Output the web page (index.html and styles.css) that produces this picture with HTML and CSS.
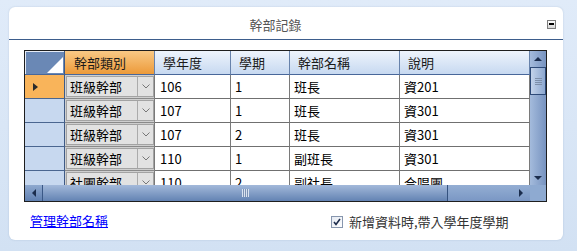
FILE: index.html
```html
<!DOCTYPE html>
<html lang="zh-Hant">
<head>
  <meta charset="UTF-8" />
  <title>幹部記錄</title>
  <link rel="stylesheet" href="styles.css">
</head>
<body>

  <div class="panel">
    <div class="panel-head">
      <span class="panel-title">幹部記錄</span>
      <span class="collapse-btn"></span>
    </div>

    <div class="panel-body">
      <div class="grid">
        <div class="grid-top">
          <div class="grid-view">
            <div class="row head-row">
              <div class="cell corner-head">
                <svg width="40" height="24" viewBox="0 0 40 24"><polygon points="22,22 38,6 38,22" fill="#fff"/></svg>
              </div>
              <div class="cell active">幹部類別</div>
              <div class="cell">學年度</div>
              <div class="cell">學期</div>
              <div class="cell">幹部名稱</div>
              <div class="cell">說明</div>
            </div>

            <div class="row">
              <div class="cell row-head current"></div>
              <div class="cell combo"><div class="combo-box"><span class="combo-text">班級幹部</span><span class="combo-btn"><svg width="8" height="5" viewBox="0 0 8 5"><polyline points="0.5,0.5 4,4 7.5,0.5" fill="none" stroke="#777"/></svg></span></div></div>
              <div class="cell num">106</div>
              <div class="cell">1</div>
              <div class="cell">班長</div>
              <div class="cell">資201</div>
            </div>

            <div class="row">
              <div class="cell row-head"></div>
              <div class="cell combo"><div class="combo-box"><span class="combo-text">班級幹部</span><span class="combo-btn"><svg width="8" height="5" viewBox="0 0 8 5"><polyline points="0.5,0.5 4,4 7.5,0.5" fill="none" stroke="#777"/></svg></span></div></div>
              <div class="cell num">107</div>
              <div class="cell">1</div>
              <div class="cell">班長</div>
              <div class="cell">資301</div>
            </div>

            <div class="row">
              <div class="cell row-head"></div>
              <div class="cell combo"><div class="combo-box"><span class="combo-text">班級幹部</span><span class="combo-btn"><svg width="8" height="5" viewBox="0 0 8 5"><polyline points="0.5,0.5 4,4 7.5,0.5" fill="none" stroke="#777"/></svg></span></div></div>
              <div class="cell num">107</div>
              <div class="cell">2</div>
              <div class="cell">班長</div>
              <div class="cell">資301</div>
            </div>

            <div class="row">
              <div class="cell row-head"></div>
              <div class="cell combo"><div class="combo-box"><span class="combo-text">班級幹部</span><span class="combo-btn"><svg width="8" height="5" viewBox="0 0 8 5"><polyline points="0.5,0.5 4,4 7.5,0.5" fill="none" stroke="#777"/></svg></span></div></div>
              <div class="cell num">110</div>
              <div class="cell">1</div>
              <div class="cell">副班長</div>
              <div class="cell">資301</div>
            </div>

            <div class="row">
              <div class="cell row-head"></div>
              <div class="cell combo"><div class="combo-box"><span class="combo-text">社團幹部</span><span class="combo-btn"><svg width="8" height="5" viewBox="0 0 8 5"><polyline points="0.5,0.5 4,4 7.5,0.5" fill="none" stroke="#777"/></svg></span></div></div>
              <div class="cell num">110</div>
              <div class="cell">2</div>
              <div class="cell">副社長</div>
              <div class="cell">合唱團</div>
            </div>
          </div>

          <div class="vscroll">
            <div class="vs-btn"><span class="arrow-up"></span></div>
            <div class="vs-thumb"><i></i><i></i><i></i><i></i></div>
            <div class="vs-track"></div>
            <div class="vs-btn down"><span class="arrow-down"></span></div>
          </div>
        </div>

        <div class="grid-bottom">
          <div class="hscroll">
            <div class="hs-btn"><span class="arrow-left"></span></div>
            <div class="hs-thumb"><span class="grip"></span></div>
            <div class="hs-track"><span class="arrow-right"></span></div>
          </div>
          <div class="corner"></div>
        </div>
      </div>

      <div class="panel-foot">
        <a href="#" class="manage-link">管理幹部名稱</a>
        <label class="check">
          <svg width="12" height="12" viewBox="0 0 12 12">
            <defs>
              <linearGradient id="cbFill" x1="0" y1="0" x2="1" y2="1">
                <stop offset="0" stop-color="#e4e9f2"/>
                <stop offset="1" stop-color="#ffffff"/>
              </linearGradient>
            </defs>
            <rect x="0.5" y="0.5" width="11" height="11" fill="url(#cbFill)" stroke="#8796ae"/>
            <polyline points="3,6 5,8.5 9,3" fill="none" stroke="#1d2c4c" stroke-width="1.6"/>
          </svg>
          <span>新增資料時,帶入學年度學期</span>
        </label>
      </div>
    </div>
  </div>

</body>
</html>
```

FILE: styles.css
```css
* { box-sizing: border-box; margin: 0; padding: 0; }
body {
  font-family: "Noto Sans CJK TC", "Microsoft JhengHei", sans-serif;
  font-size: 13px;
  color: #000;
  background: linear-gradient(#e0ebf9, #d2e1f3);
  width: 577px;
  height: 251px;
  padding: 7px 0 0 9px;
}

.panel {
  width: 554px;
  height: 233px;
  background: #fff;
  border-radius: 6px;
  box-shadow: 0 0 2px rgba(80, 110, 150, 0.25);
}

.panel-head {
  height: 33px;
  display: flex;
  align-items: center;
  padding: 2px 7px 0 0;
  border-bottom: 1px solid #3d5d8c;
}

.panel-title {
  flex: 1;
  text-align: center;
  color: #555;
}

.collapse-btn {
  width: 9px;
  height: 9px;
  margin-left: 5px;
  border: 1px solid #7c7c7c;
  background: linear-gradient(#fff, #d6d6d6);
  display: flex;
  align-items: center;
  justify-content: center;
}

.collapse-btn::before {
  content: "";
  width: 5px;
  height: 2px;
  background: #000;
}

.panel-body {
  padding: 10px 0 0 15px;
}

/* grid */
.grid {
  width: 523px;
  border: 1px solid #1e1e1e;
}

.grid-top {
  display: flex;
  height: 134px;
}

.grid-view {
  width: 505px;
  height: 134px;
  overflow: hidden;
}

.row {
  display: grid;
  grid-template-columns: 40px 90px 76px 59px 110px 130px;
  height: 24px;
}

.cell {
  border-right: 1px solid #7a7a7a;
  border-bottom: 1px solid #707070;
  padding-left: 4px;
  line-height: 23px;
  white-space: nowrap;
  overflow: hidden;
}

.cell.num {
  padding-left: 5px;
}

.head-row .cell {
  background: linear-gradient(#eef4fc, #c7d9f1);
  border-right-color: #6782ab;
  border-bottom-color: #48679a;
  padding-left: 8px;
  color: #1a1a1a;
}

.head-row .cell.active {
  background: linear-gradient(#f9c985, #ec9a3a);
  padding-left: 9px;
}

.head-row .corner-head {
  background: #6a88b5;
  box-shadow: inset 1px 1px 0 #e6ecf6;
  border-right-color: #3e5a86;
  padding: 0;
}

.corner-head svg {
  display: block;
}

.row-head {
  background: #c7d8ef;
  border-right-color: #3e5a86;
  border-bottom-color: #4a6690;
  padding: 0;
}

.row-head.current {
  background: #f9b45a;
  display: flex;
  align-items: center;
  padding-left: 8px;
}

.row-head.current::before {
  content: "";
  border-left: 5px solid #2b2b2b;
  border-top: 4px solid transparent;
  border-bottom: 4px solid transparent;
}

.cell.combo {
  padding: 1px 0 1px 1px;
  background: #cfcfcf;
  border-bottom-color: #8a8a8a;
}

.combo-box {
  display: flex;
  height: 100%;
  border: 1px solid #a3a3a3;
  background: #e2e2e2;
}

.combo-text {
  flex: 1;
  padding-left: 3px;
  line-height: 19px;
}

.combo-btn {
  width: 16px;
  border-left: 1px solid #ababab;
  display: flex;
  align-items: center;
  justify-content: center;
}

/* scrollbars */
.vscroll {
  width: 16px;
  display: flex;
  flex-direction: column;
  background: linear-gradient(to right, #a4bbdc, #7793c0);
}

.vs-btn {
  height: 16px;
  display: flex;
  align-items: center;
  justify-content: center;
}

.vs-btn.down {
  height: 15px;
}

.vs-thumb {
  height: 28px;
  border: 1px solid #2d4a78;
  background: linear-gradient(to right, #c3d3ea, #8ca7cf);
  display: flex;
  flex-direction: column;
  align-items: center;
  justify-content: center;
  gap: 1px;
}

.vs-thumb i {
  width: 7px;
  height: 1px;
  background: #7d8fa9;
}

.vs-track {
  flex: 1;
}

.arrow-up {
  border-bottom: 4px solid #1b2d4d;
  border-left: 4px solid transparent;
  border-right: 4px solid transparent;
}

.arrow-down {
  border-top: 4px solid #1b2d4d;
  border-left: 4px solid transparent;
  border-right: 4px solid transparent;
}

.arrow-left {
  border-right: 4px solid #1b2d4d;
  border-top: 4px solid transparent;
  border-bottom: 4px solid transparent;
}

.arrow-right {
  border-left: 4px solid #1b2d4d;
  border-top: 4px solid transparent;
  border-bottom: 4px solid transparent;
}

.grid-bottom {
  display: flex;
  height: 16px;
}

.hscroll {
  width: 505px;
  display: flex;
}

.hs-btn {
  width: 18px;
  background: linear-gradient(#8fa9cf, #6080b1);
  border-right: 1px solid #3a5886;
  display: flex;
  align-items: center;
  justify-content: center;
}

.hs-thumb {
  width: 405px;
  background: linear-gradient(#a3b9da, #6383b3);
  border-right: 1px solid #34527f;
  display: flex;
  align-items: center;
  justify-content: center;
}

.grip {
  width: 7px;
  height: 8px;
  background: repeating-linear-gradient(to right, #dbe4f1 0 1px, #7e93b4 1px 2px);
}

.hs-track {
  flex: 1;
  background: linear-gradient(#94aed3, #7a97c4);
  display: flex;
  align-items: center;
  justify-content: flex-end;
  padding-right: 7px;
}

.corner {
  width: 16px;
  background: #8eaad1;
}

/* footer */
.panel-foot {
  display: grid;
  grid-template-columns: 301px auto;
  align-items: center;
  margin-top: 9px;
  padding-left: 6px;
  line-height: 16px;
}

.manage-link {
  color: #0000ff;
  justify-self: start;
}

.check {
  display: flex;
  align-items: center;
  gap: 6px;
  color: #333;
  padding-top: 3px;
}

.check svg {
  display: block;
}
```
